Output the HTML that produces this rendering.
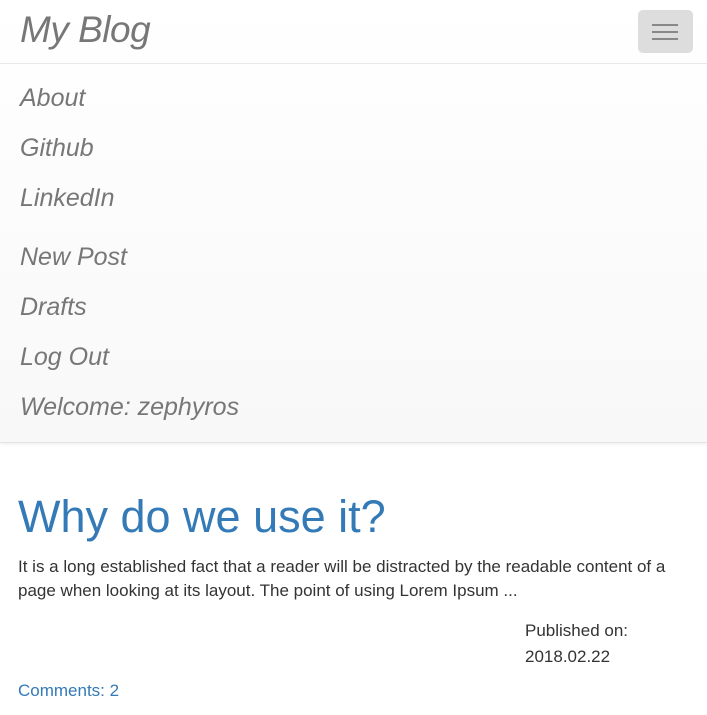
<!DOCTYPE html>
<html><head><style>
body{margin:0;width:707px;height:715px;background:#fff;font-family:"Liberation Sans",sans-serif;overflow:hidden;position:relative}
.nav{position:absolute;left:0;top:0;width:707px;height:442px;background:linear-gradient(#fff,#f8f8f8);border-bottom:1px solid #e4e4e4;box-shadow:0 1px 4px rgba(0,0,0,.08)}
.hdr{height:63px;border-bottom:1px solid #e7e7e7;position:relative}
.brand{position:absolute;left:20px;top:9px;font-size:37px;color:#777;font-style:italic;letter-spacing:-0.5px}
.tog{position:absolute;left:638px;top:10px;width:55px;height:43px;background:#ddd;border-radius:5px}
.tog i{position:absolute;left:14px;width:26px;height:2px;background:#888}
.it{position:absolute;left:20px;font-size:25px;color:#777;font-style:italic}
h1{position:absolute;left:18px;top:491px;margin:0;font-weight:normal;font-size:45px;color:#337ab7}
p{position:absolute;left:18px;top:555px;margin:0;width:685px;font-size:17px;line-height:24px;color:#333}
.pub{position:absolute;left:525px;top:618px;font-size:17px;line-height:26px;color:#333}
.cm{position:absolute;left:18px;top:681px;font-size:17px;color:#337ab7}
</style></head><body>
<div class="nav">
<div class="hdr"><div class="brand">My Blog</div>
<div class="tog"><i style="top:14px"></i><i style="top:21px"></i><i style="top:28px"></i></div></div>
<div class="it" style="top:84px">About</div>
<div class="it" style="top:134px">Github</div>
<div class="it" style="top:184px">LinkedIn</div>
<div class="it" style="top:243px">New Post</div>
<div class="it" style="top:293px">Drafts</div>
<div class="it" style="top:343px">Log Out</div>
<div class="it" style="top:393px">Welcome: zephyros</div>
</div>
<h1>Why do we use it?</h1>
<p>It is a long established fact that a reader will be distracted by the readable content of a page when looking at its layout. The point of using Lorem Ipsum ...</p>
<div class="pub">Published on:<br>2018.02.22</div>
<div class="cm">Comments: 2</div>
</body></html>
